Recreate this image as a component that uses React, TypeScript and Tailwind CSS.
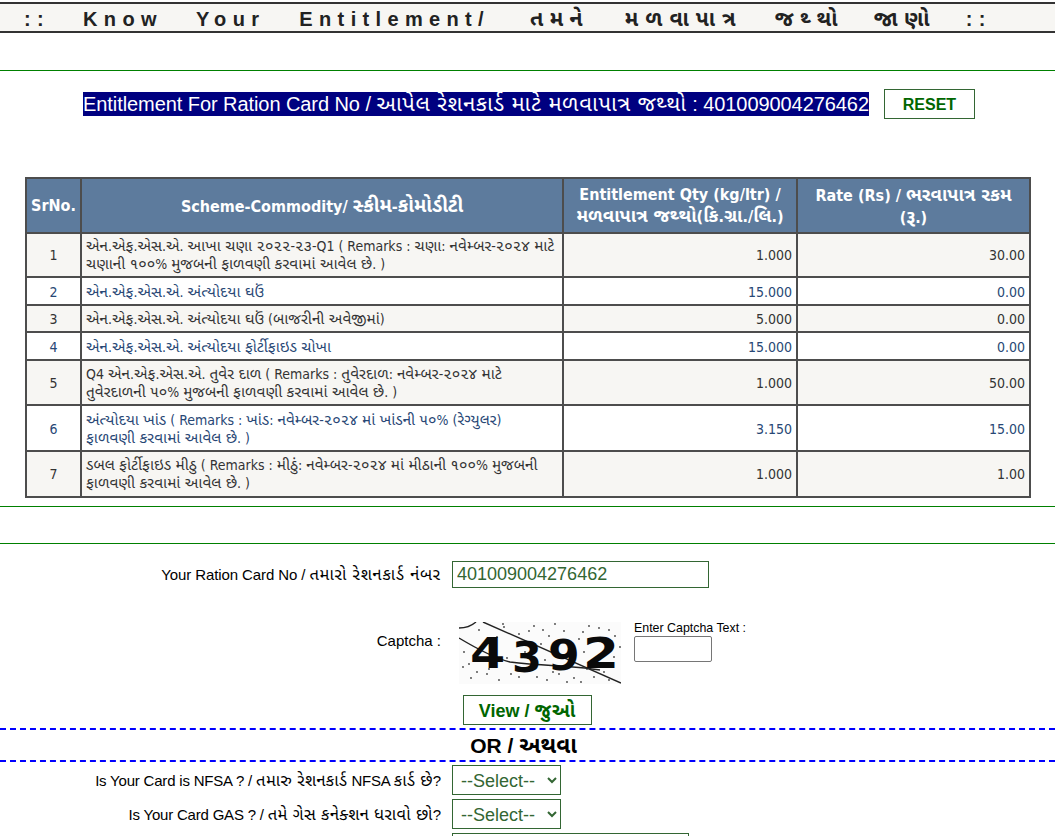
function G({ s, cls }: { s: string; cls: string }) {
  const parts = s.split(/([\u0A80-\u0AFF]+(?: [\u0A80-\u0AFF]+)*)/);
  return (
    <>
      {parts.map((p, i) => (i % 2 === 1 ? <span key={i} className={cls}>{p}</span> : p))}
    </>
  );
}

const rows = [
  { n: "1", t: ["એન.એફ.એસ.એ. આખા ચણા ૨૦૨૨-૨૩-Q1 ( Remarks : ચણા: નવેમ્બર-૨૦૨૪ માટે", "ચણાની ૧૦૦% મુજબની ફાળવણી કરવામાં આવેલ છે. )"], q: "1.000", r: "30.00", h: "h-[44px]", p: "" },
  { n: "2", t: ["એન.એફ.એસ.એ. અંત્યોદયા ઘઉં"], q: "15.000", r: "0.00", h: "h-[28px]", p: "pt-px" },
  { n: "3", t: ["એન.એફ.એસ.એ. અંત્યોદયા ઘઉં (બાજરીની અવેજીમાં)"], q: "5.000", r: "0.00", h: "h-[27px]", p: "" },
  { n: "4", t: ["એન.એફ.એસ.એ. અંત્યોદયા ફોર્ટીફાઇડ ચોખા"], q: "15.000", r: "0.00", h: "h-[28px]", p: "pt-px" },
  { n: "5", t: ["Q4 એન.એફ.એસ.એ. તુવેર દાળ ( Remarks : તુવેરદાળ: નવેમ્બર-૨૦૨૪ માટે", "તુવેરદાળની ૫૦% મુજબની ફાળવણી કરવામાં આવેલ છે. )"], q: "1.000", r: "50.00", h: "h-[45px]", p: "" },
  { n: "6", t: ["અંત્યોદયા ખાંડ ( Remarks : ખાંડ: નવેમ્બર-૨૦૨૪ માં ખાંડની ૫૦% (રેગ્યુલર)", "ફાળવણી કરવામાં આવેલ છે. )"], q: "3.150", r: "15.00", h: "h-[46px]", p: "pt-px" },
  { n: "7", t: ["ડબલ ફોર્ટીફાઇડ મીઠુ ( Remarks : મીઠું: નવેમ્બર-૨૦૨૪ માં મીઠાની ૧૦૦% મુજબની", "ફાળવણી કરવામાં આવેલ છે. )"], q: "1.000", r: "1.00", h: "h-[46px]", p: "" },
];

const dots = [[20,8],[45,5],[60,12],[75,4],[90,14],[105,9],[120,17],[140,6],[150,20],[10,42],[18,50],[30,47],[52,52],[60,55],[70,48],[88,58],[100,52],[115,56],[128,47],[145,50],[5,30],[155,35],[38,15],[82,22],[110,30],[44,2],[70,9],[96,2],[130,4],[150,8],[156,14],[138,16],[124,10],[84,8],[28,52],[12,56],[40,58],[78,55],[94,50],[122,60],[108,60],[150,58],[135,55],[4,45],[48,36],[86,38],[125,30],[161,25],[66,30],[101,18]];

const digits: [string, number, number, number][] = [["4", 11, 46, 1.18], ["3", 53, 50, 1.0], ["9", 89, 48, 1.06], ["2", 124, 46, 1.2]];

function Captcha() {
  return (
    <svg width="162" height="62" viewBox="0 0 162 62" className="block">
      <rect width="162" height="62" fill="#fbfbfb" />
      {dots.map(([x, y], i) => <circle key={i} cx={x} cy={y} r="0.9" fill="#444" />)}
      <path d="M0 16 C 20 28 35 36 51 40 C 85 44 115 44 141 48" stroke="#222" strokeWidth="1.4" fill="none" />
      <path d="M24 0 L162 61" stroke="#222" strokeWidth="1.4" fill="none" />
      <path d="M0 6 Q 10 6 17 0" stroke="#222" strokeWidth="1.4" fill="none" />
      <g fontFamily="'DejaVu Sans', sans-serif" fontWeight="bold" fontSize="43" fill="#0a0a0a">
        {digits.map(([d, x, y, sx]) => (
          <text key={d} transform={`translate(${x} ${y}) scale(${sx} 1)`}>{d}</text>
        ))}
      </g>
    </svg>
  );
}

function Sel() {
  return (
    <select className="w-[109px] h-[30px] border border-[#336633] text-[#336633] text-[18px] bg-white pl-[4px] pt-px [font-family:'Liberation_Sans',sans-serif]" defaultValue="">
      <option value="">--Select--</option>
    </select>
  );
}

const F = "text-[1.1em] tracking-[0.8px]";
const F2 = "text-[1.1em] tracking-[0.4px]";

export default function App() {
  const cell = "border-2 border-[#4d4d4d] p-0";
  const label = "flex items-center justify-end whitespace-nowrap";
  return (
    <div className="h-[836px] overflow-hidden bg-white text-black [font-family:'Liberation_Sans','Noto_Sans_Gujarati',sans-serif]">
      <div className="mt-[2px] h-[31px] border-y-2 border-[#333] bg-[#f7f6f3] pl-[24px] text-[20px] leading-[30px] font-bold text-[#222] whitespace-nowrap tracking-[6.35px]">
        <span>::</span>
        <span className="ml-[33px]">Know</span>
        <span className="ml-[33px]">Your</span>
        <span className="ml-[34px]">Entitlement/</span>
        <span className="ml-[40px] text-[21.4px]">તમને</span>
        <span className="ml-[36px] text-[21.4px] tracking-[7px]">મળવાપાત્ર</span>
        <span className="ml-[32px] text-[21.4px]">જથ્થો</span>
        <span className="ml-[30px] text-[21.4px]">જાણો</span>
        <span className="ml-[30px]">::</span>
      </div>
      <hr className="mt-[37px] border-0 border-t border-[#008000]" />
      <div className="mt-[18px] flex items-center h-[30px] pl-[83px]">
        <span className="bg-[#000080] text-white text-[20px] leading-[24px] whitespace-nowrap tracking-[-0.07px]">
          <G s="Entitlement For Ration Card No / આપેલ રેશનકાર્ડ માટે મળવાપાત્ર જથ્થો : 401009004276462" cls="text-[22px] tracking-[0.65px]" />
        </span>
        <button className="ml-[15px] w-[91px] h-[30px] pt-[2px] border border-[#336633] bg-white text-[#006600] text-[16px] font-bold">RESET</button>
      </div>
      <div className="mt-[58px] ml-[25px] [font-family:'DejaVu_Sans_Condensed','Noto_Sans_Gujarati',sans-serif]">
        <table className="w-[1004px] table-fixed border-collapse text-[14px] leading-[18px] text-[#333]">
          <colgroup><col className="w-[55px]" /><col className="w-[482px]" /><col className="w-[234px]" /><col className="w-[233px]" /></colgroup>
          <thead>
            <tr className="h-[55px] bg-[#5d7b9d] text-white font-bold text-[16px] leading-[21px]">
              <th className={cell}>SrNo.</th>
              <th className={cell}><G s="Scheme-Commodity/ સ્કીમ-કોમોડીટી" cls="text-[1.22em]" /></th>
              <th className={cell}>Entitlement Qty (kg/ltr) /<br /><G s="મળવાપાત્ર જથ્થો(કિ.ગ્રા./લિ.)" cls="text-[1.15em]" /></th>
              <th className={cell}><G s="Rate (Rs) / ભરવાપાત્ર રકમ" cls="text-[1.15em]" /><br /><G s="(રૂ.)" cls="text-[1.15em]" /></th>
            </tr>
          </thead>
          <tbody>
            {rows.map((r, i) => (
              <tr key={r.n} className={`${r.h} ${i % 2 === 0 ? "bg-[#f7f6f3] text-[#333]" : "bg-white text-[#284775]"}`}>
                <td className={`${cell} ${r.p} text-center`}>{r.n}</td>
                <td className={`${cell} ${r.p} pl-[4px]`}>{r.t.map((l) => <div key={l} className="whitespace-nowrap"><G s={l} cls="text-[1.1em]" /></div>)}</td>
                <td className={`${cell} ${r.p} text-right pr-[4px]`}>{r.q}</td>
                <td className={`${cell} ${r.p} text-right pr-[4px]`}>{r.r}</td>
              </tr>
            ))}
          </tbody>
        </table>
      </div>
      <hr className="mt-[8px] border-0 border-t border-[#008000]" />
      <hr className="mt-[36px] border-0 border-t border-[#008000]" />
      <div className="mt-[17px] grid grid-cols-[441px_1fr] gap-x-[11px] text-[15px]">
        <div className={`h-[27px] ${label} tracking-[-0.1px]`}><span><G s="Your Ration Card No / તમારો રેશનકાર્ડ નંબર" cls={F} /></span></div>
        <input readOnly value="401009004276462" className="w-[257px] h-[27px] border border-[#336633] pl-[4px] text-[18px] text-[#336633]" />
        <div className="mt-[34px] h-[62px] pt-[8px] flex items-start justify-end">Captcha :</div>
        <div className="mt-[34px] flex pl-[7px]">
          <Captcha />
          <div className="ml-[13px]">
            <div className="-mt-px mb-px text-[12.4px] leading-[14px] whitespace-nowrap">Enter Captcha Text :</div>
            <input className="block w-[78px] h-[26px] border border-[#767676] rounded-[2px]" />
          </div>
        </div>
        <div />
        <button className="mt-[11px] ml-[11px] w-[129px] h-[30px] pt-px border border-[#336633] bg-white text-[#006600] text-[18px] font-bold"><G s="View / જુઓ" cls="text-[1.05em] tracking-[0.8px]" /></button>
      </div>
      <div className="mt-[3px] border-t-2 border-dashed border-[#0000ff] border-b-2 h-[34px] pr-[8px] text-center text-[21px] font-bold leading-[30px]"><G s="OR / અથવા" cls="text-[1.08em]" /></div>
      <div className="mt-[3px] grid grid-cols-[441px_1fr] gap-x-[11px] gap-y-[4px] text-[15px]">
        <div className={`h-[30px] ${label} tracking-[-0.2px]`}><span><G s="Is Your Card is NFSA ? / તમારુ રેશનકાર્ડ NFSA કાર્ડ છે?" cls={F2} /></span></div>
        <Sel />
        <div className={`h-[30px] ${label} tracking-[-0.2px]`}><span><G s="Is Your Card GAS ? / તમે ગેસ કનેક્શન ધરાવો છો?" cls={F2} /></span></div>
        <Sel />
        <div />
        <div className="w-[237px] h-[30px] border border-[#336633]" />
      </div>
    </div>
  );
}
